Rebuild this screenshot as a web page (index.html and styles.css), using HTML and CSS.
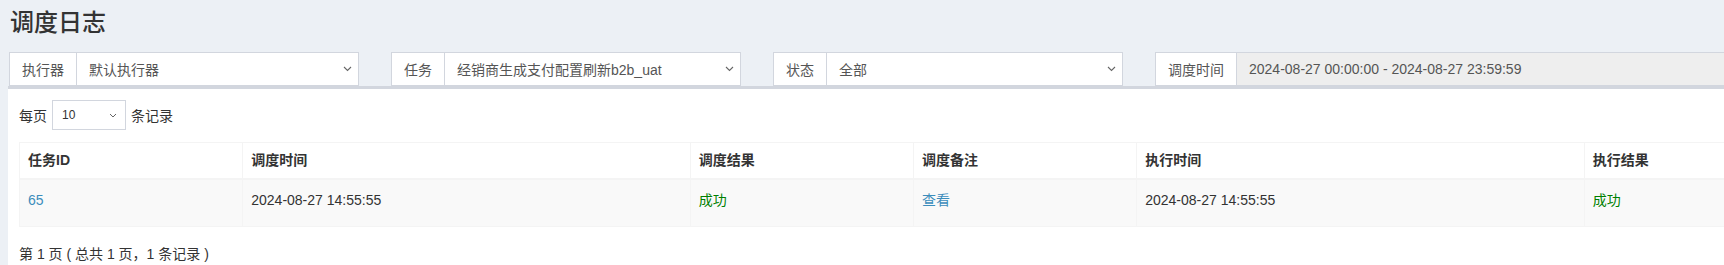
FILE: index.html
```html
<!DOCTYPE html>
<html lang="zh-CN">
<head>
    <meta charset="UTF-8">
    <meta name="viewport" content="width=device-width, initial-scale=1.0">
    <title>调度日志</title>
    <link rel="stylesheet" href="styles.css">
</head>
<body>

    <h1 class="page-title">调度日志</h1>

    <!-- Filters -->
    <div class="filters">
        <div class="input-group">
            <span class="addon">执行器</span>
            <div class="fake-select">默认执行器
                <svg class="caret" width="9" height="6" viewBox="0 0 9 6"><path d="M1 1l3.5 3.5L8 1" fill="none" stroke="#666" stroke-width="1.1"/></svg>
            </div>
        </div>
        <div class="input-group">
            <span class="addon">任务</span>
            <div class="fake-select">经销商生成支付配置刷新b2b_uat
                <svg class="caret" width="9" height="6" viewBox="0 0 9 6"><path d="M1 1l3.5 3.5L8 1" fill="none" stroke="#666" stroke-width="1.1"/></svg>
            </div>
        </div>
        <div class="input-group">
            <span class="addon">状态</span>
            <div class="fake-select">全部
                <svg class="caret" width="9" height="6" viewBox="0 0 9 6"><path d="M1 1l3.5 3.5L8 1" fill="none" stroke="#666" stroke-width="1.1"/></svg>
            </div>
        </div>
        <div class="input-group wide">
            <span class="addon">调度时间</span>
            <div class="fake-input readonly">2024-08-27 00:00:00 - 2024-08-27 23:59:59</div>
        </div>
    </div>

    <!-- Log table -->
    <div class="box">
        <div class="length">
            每页
            <div class="small-select">10
                <svg class="caret" width="8" height="5" viewBox="0 0 8 5"><path d="M1 1l3 3 3-3" fill="none" stroke="#666" stroke-width="1"/></svg>
            </div>
            条记录
        </div>

        <table class="log-table">
            <colgroup>
                <col class="c-id">
                <col class="c-wide">
                <col class="c-narrow">
                <col class="c-narrow">
                <col class="c-wide">
                <col class="c-narrow">
            </colgroup>
            <thead>
                <tr>
                    <th>任务ID</th>
                    <th>调度时间</th>
                    <th>调度结果</th>
                    <th>调度备注</th>
                    <th>执行时间</th>
                    <th>执行结果</th>
                </tr>
            </thead>
            <tbody>
                <tr>
                    <td><a class="link">65</a></td>
                    <td>2024-08-27 14:55:55</td>
                    <td><span class="ok">成功</span></td>
                    <td><a class="link">查看</a></td>
                    <td>2024-08-27 14:55:55</td>
                    <td><span class="ok">成功</span></td>
                </tr>
            </tbody>
        </table>

        <div class="info">第 1 页 ( 总共 1 页，1 条记录 )</div>
    </div>

</body>
</html>
```

FILE: styles.css
```css
body {
    margin: 0;
    background: #ecf0f5;
    font-family: 'Liberation Sans', 'Noto Sans CJK SC', sans-serif;
    font-size: 14px;
    color: #333;
    overflow: hidden;
}

.page-title {
    margin: 0 0 14px;
    padding: 8px 10px 0;
    font-size: 24px;
    line-height: 30px;
    font-weight: 500;
    color: #333;
}

/* Filters */
.filters {
    display: flex;
    gap: 32px;
    padding-left: 9px;
}
.input-group {
    display: flex;
    flex: 0 0 350px;
    height: 34px;
    box-sizing: border-box;
}
.input-group.wide {
    flex: 0 0 700px;
}
.addon {
    display: flex;
    align-items: center;
    padding: 0 12px;
    background: #fff;
    border: 1px solid #d2d6de;
    color: #555;
    white-space: nowrap;
}
.fake-select,
.fake-input {
    flex: 1;
    display: flex;
    align-items: center;
    padding: 0 12px;
    background: #fff;
    border: 1px solid #d2d6de;
    border-left: none;
    color: #555;
    white-space: nowrap;
}
.fake-select {
    padding-right: 6px;
}
.fake-select .caret {
    margin-left: auto;
}
.fake-input.readonly {
    background: #eee;
}

/* Box */
.box {
    margin-left: 8px;
    background: #fff;
    border-top: 3px solid #d2d6de;
    padding: 11px 11px 10px;
}
.length {
    display: flex;
    align-items: center;
    gap: 5px;
    height: 30px;
    margin-bottom: 12px;
}
.small-select {
    display: flex;
    align-items: center;
    width: 74px;
    height: 30px;
    box-sizing: border-box;
    padding: 0 8px 0 9px;
    border: 1px solid #d2d6de;
    font-size: 12px;
    color: #333;
}
.small-select .caret {
    margin-left: auto;
}

/* Table */
.log-table {
    width: 1789px;
    table-layout: fixed;
    border-collapse: collapse;
    border: 1px solid #f4f4f4;
}
.log-table .c-id { width: 223px; }
.log-table .c-wide { width: 447px; }
.log-table .c-narrow { width: 223px; }
.log-table th {
    text-align: left;
    font-weight: bold;
    padding: 8px;
    line-height: 19px;
    border: 1px solid #f4f4f4;
    border-bottom-width: 2px;
}
.log-table td {
    padding: 10px 8px 16px;
    line-height: 20px;
    border: 1px solid #f4f4f4;
    background: #f9f9f9;
}
.link {
    color: #3c8dbc;
    text-decoration: none;
}
.ok {
    color: green;
}

.info {
    margin-top: 17px;
    line-height: 20px;
}
```
